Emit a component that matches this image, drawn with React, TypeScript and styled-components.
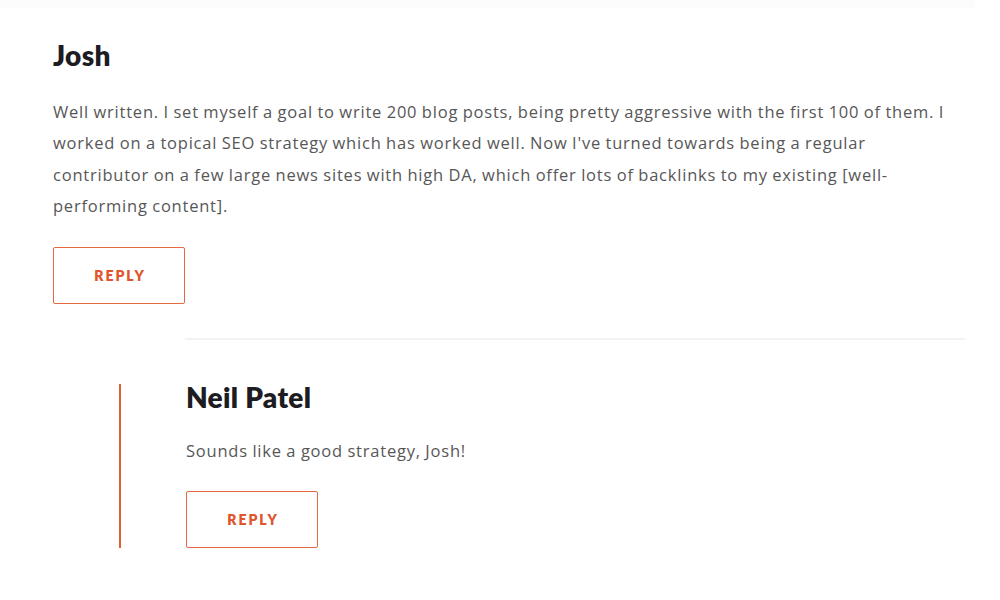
import React from "react";
import styled, { createGlobalStyle } from "styled-components";

const Global = createGlobalStyle`
  html, body { margin: 0; padding: 0; background: #ffffff; }
  body { font-family: "Open Sans", "Noto Sans", sans-serif; }
`;

const Page = styled.div`
  width: 1000px;
  height: 600px;
  overflow: hidden;
  background: #fff;
`;

const TopBand = styled.div`
  width: 975px;
  height: 8px;
  background: #fcfcfc;
`;

const Thread = styled.div`
  padding: 34px 35px 0 53px;
  display: flex;
  flex-direction: column;
`;

const Name = styled.h3`
  margin: 0;
  font-family: Lato, "Noto Sans", sans-serif;
  font-weight: 800;
  font-size: 28px;
  line-height: 26px;
  color: #1c1c22;
  letter-spacing: 0.3px;
`;

const Body = styled.p<{ $gap: number }>`
  margin: ${(p) => p.$gap}px 0 0;
  font-family: "Open Sans", "Noto Sans", sans-serif;
  font-size: 16.5px;
  line-height: 31.3px;
  color: #575757;
  font-weight: 400;
  letter-spacing: 0.78px;
  word-spacing: -0.5px;
  max-width: 905px;
`;

const ReplyButton = styled.button<{ $gap: number }>`
  margin-top: ${(p) => p.$gap}px;
  width: 132px;
  height: 57px;
  border: 1px solid #e8693f;
  border-radius: 2px;
  background: #fff;
  color: #e0552c;
  font-family: Lato, "Noto Sans", sans-serif;
  font-weight: 800;
  font-size: 14px;
  letter-spacing: 2px;
  text-transform: uppercase;
  cursor: pointer;
  padding: 0 0 0 2px;
`;

const Divider = styled.hr`
  margin: 34px 0 0 132px;
  border: 0;
  border-top: 2px solid #f2f2f2;
  height: 0;
`;

const Children = styled.div`
  margin-left: 66px;
  margin-top: 44px;
`;

const ReplyItem = styled.div`
  border-left: 2px solid #e0602f;
  padding-left: 65px;
  display: flex;
  flex-direction: column;
  align-items: flex-start;
`;

const TopComment = styled.div`
  display: flex;
  flex-direction: column;
  align-items: flex-start;
`;

export default function App() {
  return (
    <Page>
      <Global />
      <TopBand />
      <Thread>
        <TopComment>
          <Name>Josh</Name>
          <Body $gap={28}>
            Well written. I set myself a goal to write 200 blog posts, being pretty aggressive with the first 100 of them. I
            worked on a topical SEO strategy which has worked well. Now I've turned towards being a regular contributor on
            a few large news sites with high DA, which offer lots of backlinks to my existing [well-performing content].
          </Body>
          <ReplyButton $gap={26}>Reply</ReplyButton>
        </TopComment>
        <Divider />
        <Children>
          <ReplyItem>
            <Name>Neil Patel</Name>
            <Body $gap={25}>Sounds like a good strategy, Josh!</Body>
            <ReplyButton $gap={25}>Reply</ReplyButton>
          </ReplyItem>
        </Children>
      </Thread>
    </Page>
  );
}
